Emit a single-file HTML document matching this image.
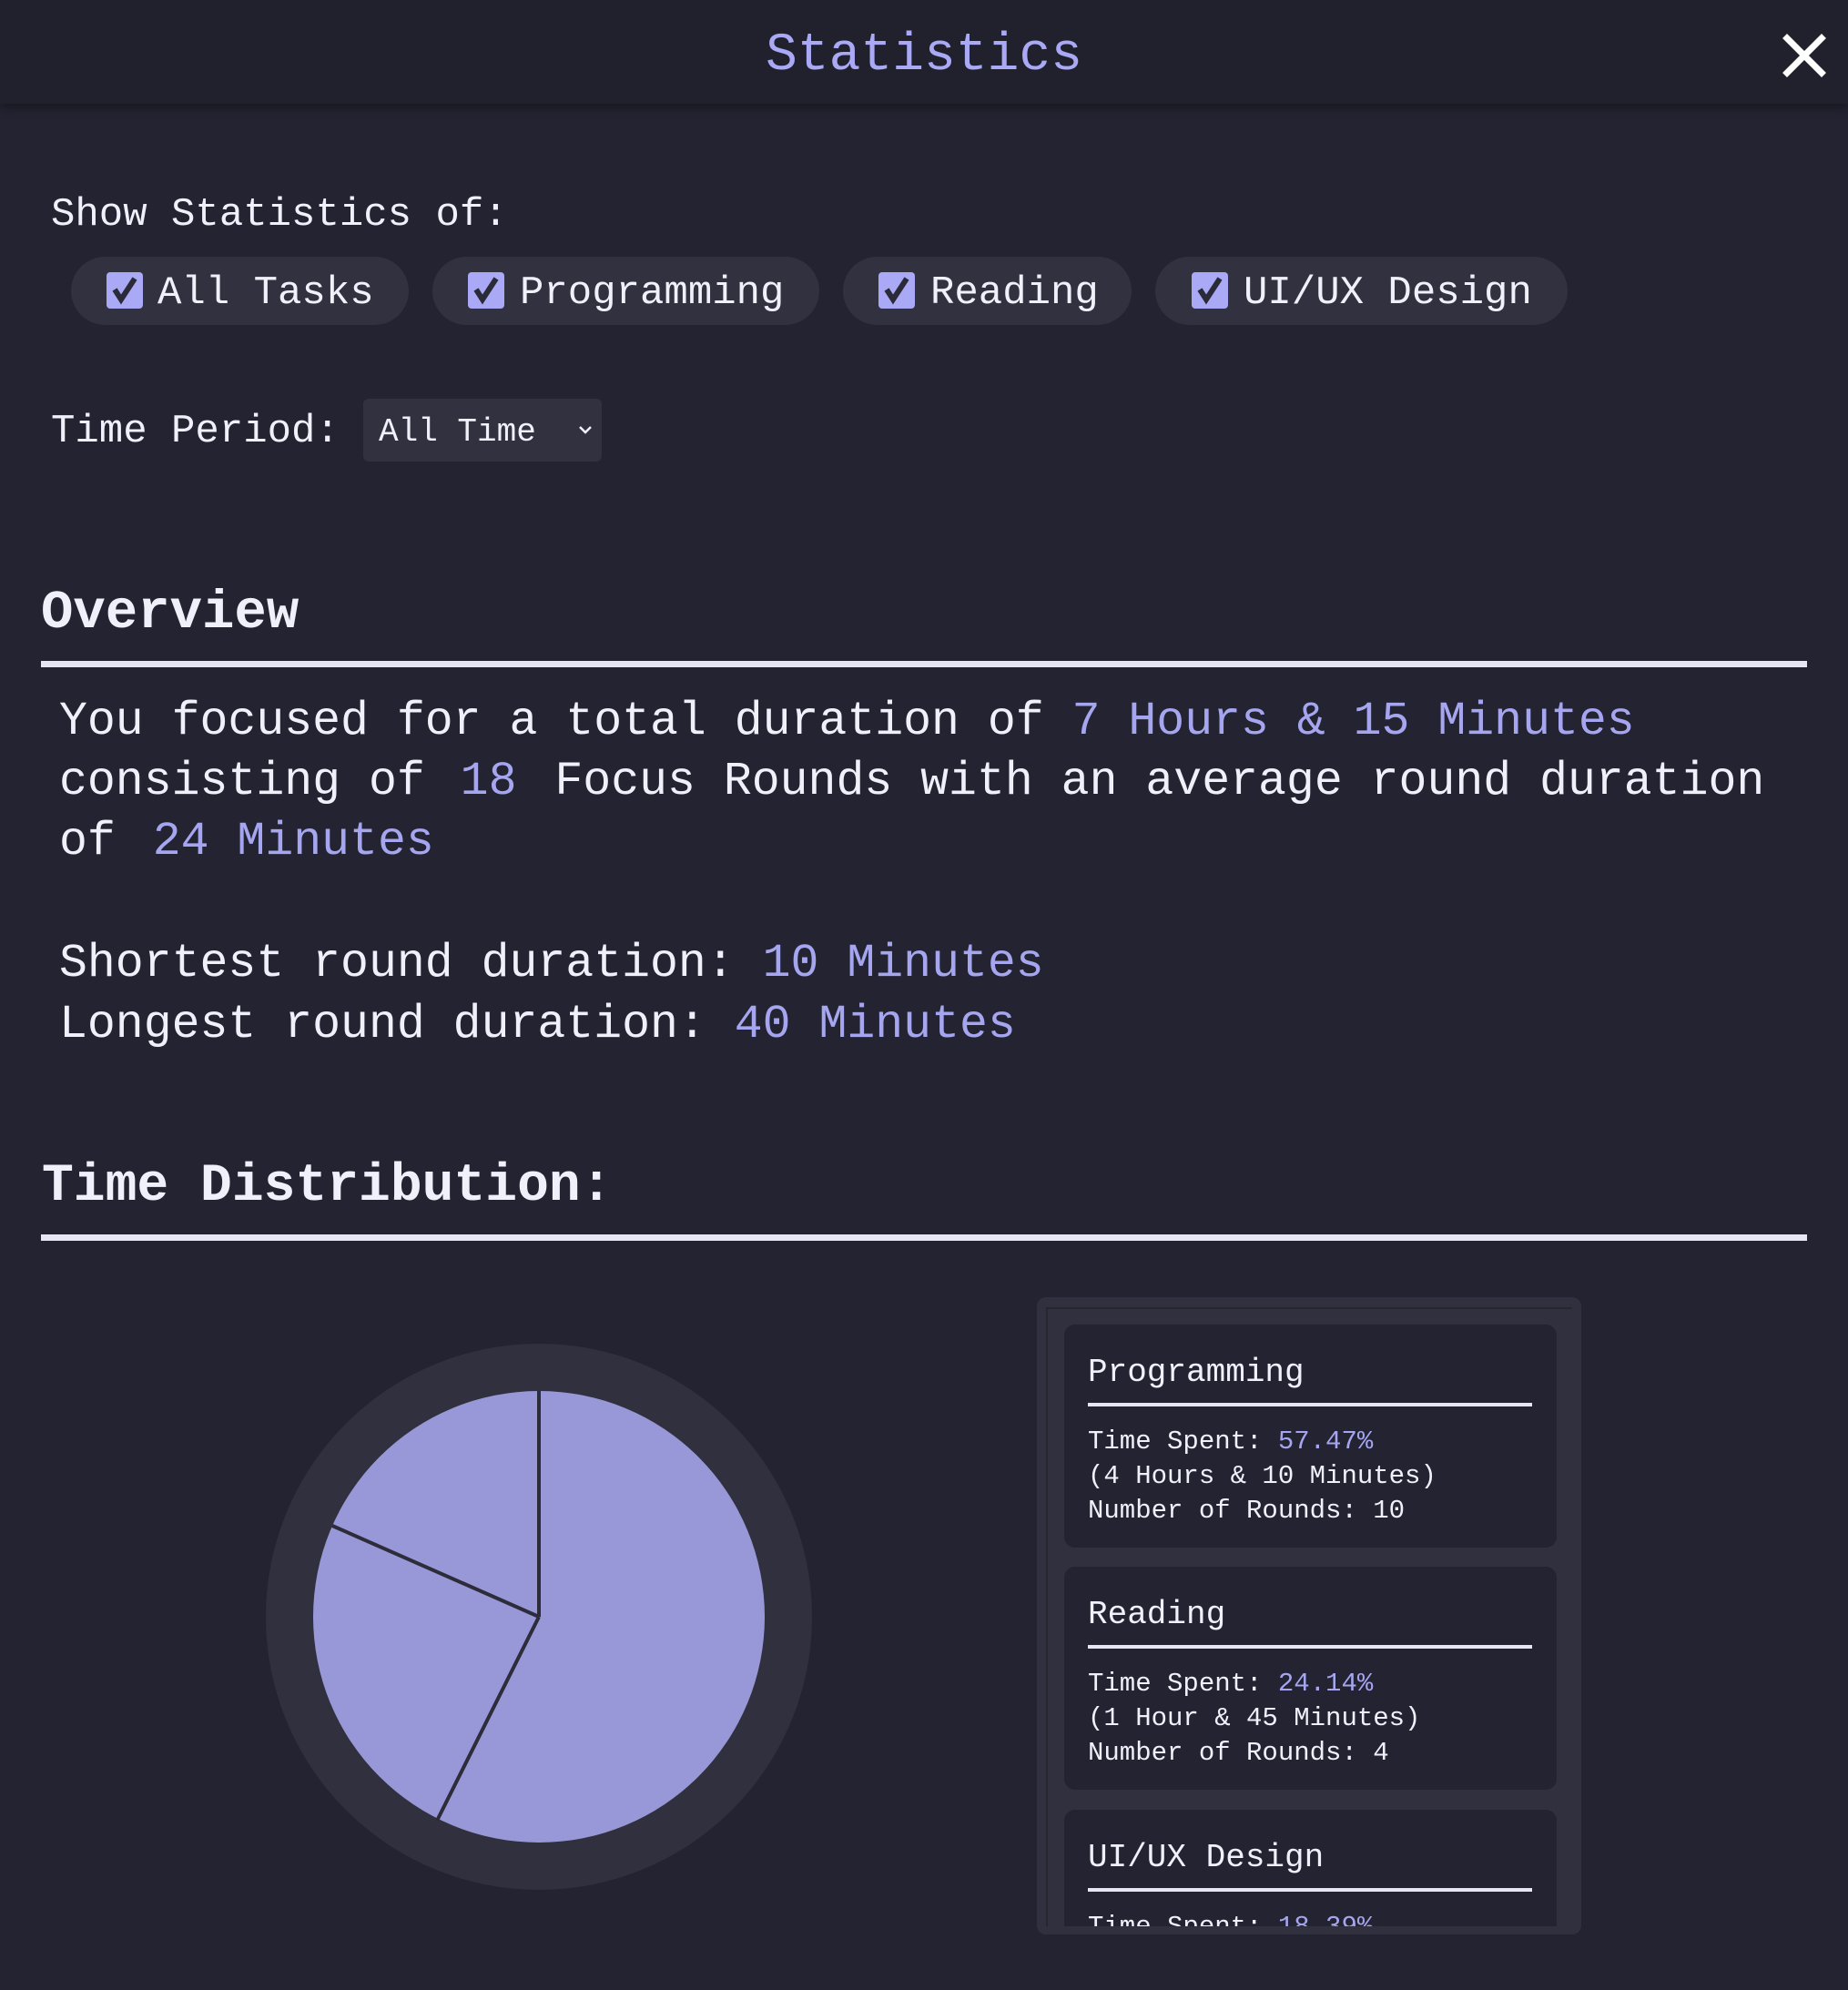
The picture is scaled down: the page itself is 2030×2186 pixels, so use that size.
<!DOCTYPE html>
<html><head><meta charset="utf-8"><style>
*{margin:0;padding:0;box-sizing:border-box}
body{width:2030px;height:2186px;background:#232331;font-family:"Liberation Mono","DejaVu Sans Mono",monospace;color:#f0f0fa;position:relative;overflow:hidden}
.a{position:absolute;white-space:pre}
.hl{color:#a6a6f0}
.hdr{position:absolute;left:0;top:0;width:2030px;height:114px;background:#21212e;box-shadow:0 4px 10px rgba(0,0,0,.35)}
.chip{position:absolute;top:282px;height:75px;border-radius:38px;background:#31313f}
.cb{position:absolute;top:299px;width:40px;height:40px;border-radius:4px;background:#a9a9f5}
.chipt{position:absolute;top:295px;font-size:44px;line-height:54px;white-space:pre}
.rule{position:absolute;left:45px;width:1940px;height:7px;background:#e6e6f5}
.p{position:absolute;left:65px;font-size:51.5px;line-height:66px;white-space:pre}
.card{position:absolute;left:1169px;width:541px;background:#232331;border-radius:12px}
.ct{position:absolute;left:26px;font-size:36px;white-space:pre}
.cr{position:absolute;left:26px;width:488px;height:4px;background:#e6e6f5}
.cbd{position:absolute;left:26px;font-size:29px;line-height:38px;white-space:pre}
</style></head><body>
<div class="hdr"></div>
<div class="a" style="left:0;width:2030px;text-align:center;top:27px;font-size:58px;line-height:70px;color:#a9a9f5">Statistics</div>
<svg class="a" style="left:1958px;top:37px" width="48" height="48" viewBox="0 0 48 48"><path d="M5 5L43 43M43 5L5 43" stroke="#fff" stroke-width="7" stroke-linecap="square"/></svg>

<div class="a" style="left:56px;top:209px;font-size:44px;line-height:54px">Show Statistics of:</div>

<div class="chip" style="left:78px;width:371px"></div>
<div class="chip" style="left:475px;width:425px"></div>
<div class="chip" style="left:926px;width:317px"></div>
<div class="chip" style="left:1269px;width:453px"></div>
<div class="cb" style="left:117px"><svg width="40" height="40"><path d="M9 19L16 30L31 7" stroke="#2a2a38" stroke-width="6" fill="none"/></svg></div>
<div class="cb" style="left:514px"><svg width="40" height="40"><path d="M9 19L16 30L31 7" stroke="#2a2a38" stroke-width="6" fill="none"/></svg></div>
<div class="cb" style="left:965px"><svg width="40" height="40"><path d="M9 19L16 30L31 7" stroke="#2a2a38" stroke-width="6" fill="none"/></svg></div>
<div class="cb" style="left:1309px"><svg width="40" height="40"><path d="M9 19L16 30L31 7" stroke="#2a2a38" stroke-width="6" fill="none"/></svg></div>
<div class="chipt" style="left:173px">All Tasks</div>
<div class="chipt" style="left:571px">Programming</div>
<div class="chipt" style="left:1022px">Reading</div>
<div class="chipt" style="left:1366px">UI/UX Design</div>

<div class="a" style="left:56px;top:447px;font-size:44px;line-height:54px">Time Period:</div>
<div class="a" style="left:399px;top:438px;width:262px;height:69px;background:#31313f;border-radius:6px"></div>
<div class="a" style="left:416px;top:453px;font-size:36px;line-height:44px">All Time</div>
<svg class="a" style="left:634px;top:465px" width="18" height="14"><path d="M3 4L9 10L15 4" stroke="#f0f0fa" stroke-width="2.5" fill="none"/></svg>

<div class="a" style="left:45px;top:639px;font-size:59px;line-height:70px;font-weight:bold">Overview</div>
<div class="rule" style="top:726px"></div>
<div class="p" style="top:760px">You focused for a total duration of <span class="hl">7 Hours &amp; 15 Minutes</span></div>
<div class="p" style="top:826px">consisting of <span class="hl" style="margin-left:8px;margin-right:11px">18</span> Focus Rounds with an average round duration</div>
<div class="p" style="top:892px">of <span class="hl" style="margin-left:10px">24 Minutes</span></div>
<div class="p" style="top:1026px">Shortest round duration: <span class="hl">10 Minutes</span></div>
<div class="p" style="top:1093px">Longest round duration: <span class="hl">40 Minutes</span></div>

<div class="a" style="left:46px;top:1269px;font-size:58px;line-height:70px;font-weight:bold">Time Distribution:</div>
<div class="rule" style="top:1356px"></div>

<svg class="a" style="left:0;top:0" width="1100" height="2186">
<circle cx="592" cy="1776" r="300" fill="#30303e"/>
<circle cx="592" cy="1776" r="248" fill="#9898d8"/>
<path d="M592 1776L592 1528M592 1776L480 2000M592 1776L365 1676" stroke="#2c2c3a" stroke-width="4" fill="none"/>
</svg>

<div class="a" style="left:1139px;top:1425px;width:598px;height:700px;background:#30303e;border-radius:10px"></div>
<div class="a" style="left:1149px;top:1436px;width:578px;height:680px;border-left:2px solid #26262f;border-top:2px solid #26262f"></div>
<div class="a" style="left:1151px;top:1438px;width:576px;height:678px;overflow:hidden">
 <div class="card" style="left:18px;top:17px;height:245px">
  <div class="ct" style="top:32px">Programming</div>
  <div class="cr" style="top:86px"></div>
  <div class="cbd" style="top:110px">Time Spent: <span class="hl">57.47%</span>
(4 Hours &amp; 10 Minutes)
Number of Rounds: 10</div>
 </div>
 <div class="card" style="left:18px;top:283px;height:245px">
  <div class="ct" style="top:32px">Reading</div>
  <div class="cr" style="top:86px"></div>
  <div class="cbd" style="top:110px">Time Spent: <span class="hl">24.14%</span>
(1 Hour &amp; 45 Minutes)
Number of Rounds: 4</div>
 </div>
 <div class="card" style="left:18px;top:550px;height:245px">
  <div class="ct" style="top:32px">UI/UX Design</div>
  <div class="cr" style="top:86px"></div>
  <div class="cbd" style="top:110px">Time Spent: <span class="hl">18.39%</span>
(1 Hour &amp; 20 Minutes)
Number of Rounds: 4</div>
 </div>
</div>
</body></html>
